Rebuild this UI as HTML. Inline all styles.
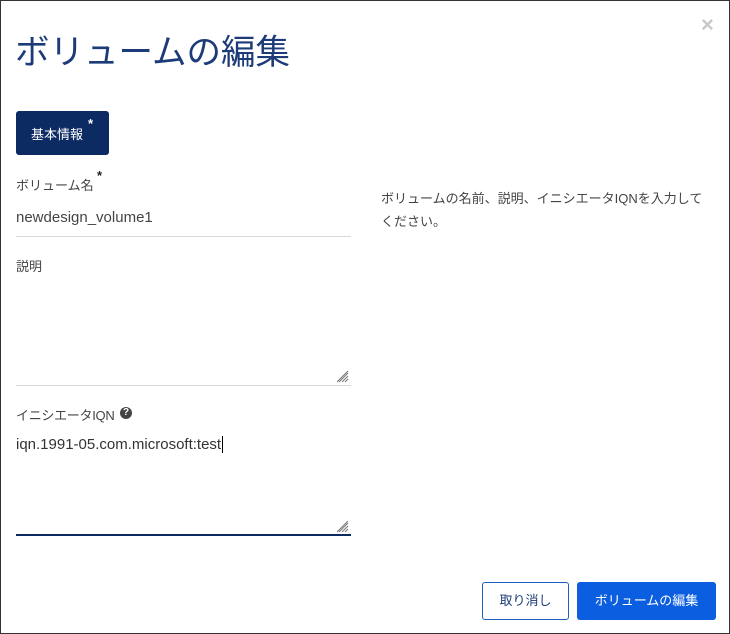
<!DOCTYPE html>
<html><head><meta charset="utf-8"><style>
body{margin:0;width:730px;height:634px;background:#fff;font-family:"Liberation Sans","Noto Sans CJK JP",sans-serif;position:relative;overflow:hidden}
.frame{position:absolute;left:0;top:0;width:728px;height:632px;border:1px solid #333}
.a{position:absolute;white-space:nowrap}
.line{position:absolute;left:16px;width:335px;height:1px;background:#d8d8d8}
.grip{position:absolute;width:12px;height:12px}
</style></head><body>
<div class="frame"></div>
<div class="a" style="left:15px;top:24px;font-size:34.5px;color:#1c3b78">ボリュームの編集</div>
<div class="a" style="left:701px;top:12px;font-size:22px;color:#c8c8c8;font-weight:bold">×</div>
<div class="a" style="left:16px;top:111px;width:93px;height:44px;background:#0c2b63;border-radius:3px"></div>
<div class="a" style="left:31px;top:124px;font-size:13px;color:#fff">基本情報</div>
<div class="a" style="left:88px;top:116px;font-size:13px;color:#fff;font-weight:bold">*</div>
<div class="a" style="left:16px;top:175px;font-size:13px;color:#444">ボリューム名</div>
<div class="a" style="left:97px;top:168px;font-size:13px;color:#222;font-weight:bold">*</div>
<div class="a" style="left:16px;top:209px;font-size:15px;color:#444">newdesign_volume1</div>
<div class="line" style="top:236px"></div>
<div class="a" style="left:16px;top:256px;font-size:13px;color:#444">説明</div>
<div class="line" style="top:385px"></div>
<svg class="grip" style="left:337px;top:371px" viewBox="0 0 12 12"><path d="M11 2L2 11M11 5L5 11M11 8L8 11M11 0L0 11" stroke="#777" stroke-width="1"/></svg>
<div class="a" style="left:16px;top:405px;font-size:13px;color:#444;letter-spacing:-0.3px">イニシエータIQN</div>
<div class="a" style="left:120px;top:407px;width:12px;height:12px;border-radius:50%;background:#444;color:#fff;font-size:10px;font-weight:bold;text-align:center;line-height:12px">?</div>
<div class="a" style="left:16px;top:436px;font-size:15px;color:#333">iqn.1991-05.com.microsoft:test<span style="border-left:1px solid #000;margin-left:1px"></span></div>
<div class="a" style="left:16px;top:534px;width:335px;height:2px;background:#0c2b63"></div>
<svg class="grip" style="left:337px;top:521px" viewBox="0 0 12 12"><path d="M11 2L2 11M11 5L5 11M11 8L8 11M11 0L0 11" stroke="#777" stroke-width="1"/></svg>
<div class="a" style="left:381px;top:187px;font-size:13px;color:#444;line-height:23px">ボリュームの名前、説明、イニシエータIQNを入力して<br>ください。</div>
<div class="a" style="left:482px;top:582px;width:85px;height:36px;border:1px solid #1a5fc0;border-radius:3px;color:#1c3b78;font-size:13px;text-align:center;line-height:36px">取り消し</div>
<div class="a" style="left:577px;top:582px;width:139px;height:38px;background:#0b5ee0;border-radius:3px;color:#fff;font-size:13px;text-align:center;line-height:38px">ボリュームの編集</div>
</body></html>
